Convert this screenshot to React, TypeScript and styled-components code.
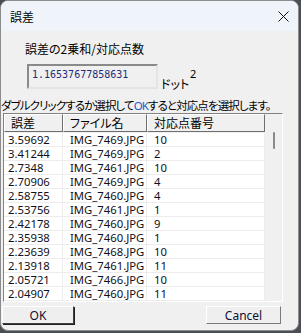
import styled, { createGlobalStyle } from 'styled-components'

const GlobalStyle = createGlobalStyle`
    html, body {
        margin: 0;
        padding: 0;
        background: #4a4f55;
    }
    body {
        font-family: "Noto Sans", "Noto Sans CJK JP", sans-serif;
        font-size: 12px;
        color: #000;
    }
`

const rows = [
    ['3.59692', 'IMG_7469.JPG', '10'],
    ['3.41244', 'IMG_7469.JPG', '2'],
    ['2.7348', 'IMG_7461.JPG', '10'],
    ['2.70906', 'IMG_7469.JPG', '4'],
    ['2.58755', 'IMG_7460.JPG', '4'],
    ['2.53756', 'IMG_7461.JPG', '1'],
    ['2.42178', 'IMG_7460.JPG', '9'],
    ['2.35938', 'IMG_7460.JPG', '1'],
    ['2.23639', 'IMG_7468.JPG', '10'],
    ['2.13918', 'IMG_7461.JPG', '11'],
    ['2.05721', 'IMG_7466.JPG', '10'],
    ['2.04907', 'IMG_7460.JPG', '11'],
    ['', '', ''],
]

const colWidths = [59, 84, 118]

const Window = styled.div`
    width: 297px;
    height: 329px;
    border: 1px solid #8c8c8c;
    border-radius: 8px;
    background: #f0f0f0;
    overflow: hidden;
    display: flex;
    flex-direction: column;
`

const TitleBar = styled.div`
    height: 30px;
    flex-shrink: 0;
    background: #eef4fa;
    display: flex;
    align-items: center;
    justify-content: space-between;
    padding-left: 9px;
    font-family: "Noto Sans CJK JP", sans-serif;
    font-size: 12px;
`

const CloseButton = styled.div`
    width: 30px;
    height: 30px;
    display: flex;
    align-items: center;
    justify-content: center;
`

const Body = styled.div`
    flex: 1;
    display: flex;
    flex-direction: column;
`

const Label = styled.div`
    margin: 10px 0 0 24px;
    height: 16px;
    line-height: 16px;
    font-family: "Noto Sans CJK JP", sans-serif;
    font-feature-settings: "palt";
`

const ValueRow = styled.div`
    margin: 7px 0 0 26px;
    display: flex;
    align-items: flex-end;
`

const ValueBox = styled.div`
    width: 124px;
    height: 21px;
    border: 2px solid;
    border-color: #8a8a8a #e4e4e4 #e4e4e4 #8a8a8a;
    background: #f0f0f0;
    color: #1e2d78;
    font-family: "DejaVu Sans Mono", monospace;
    font-size: 10px;
    padding-left: 3px;
    line-height: 18px;
    box-sizing: content-box;
`

const Unit = styled.div`
    margin-left: 3px;
    position: relative;
    font-family: "Noto Sans CJK JP", sans-serif;
    font-feature-settings: "palt";
    line-height: 14px;
    margin-bottom: -2px;
`

const Sup = styled.span`
    position: absolute;
    top: -10px;
    right: -7px;
    font-family: "Noto Sans", sans-serif;
    font-size: 11px;
`

const Hint = styled.div`
    margin: 8px 0 0 0;
    height: 16px;
    line-height: 16px;
    white-space: nowrap;
    font-family: "Noto Sans CJK JP", sans-serif;
    font-feature-settings: "palt";
    font-size: 11.5px;
    letter-spacing: -0.9px;
`

const Ok = styled.span`
    color: #1d5bc4;
    font-family: "Noto Sans", sans-serif;
`

const List = styled.div`
    margin: 0 0 0 2px;
    width: 278px;
    height: 187px;
    border: 1px solid;
    border-color: #828282 #ffffff #ffffff #828282;
    display: flex;
    overflow: hidden;
    background: #f0f0f0;
`

const Table = styled.div`
    width: 261px;
    flex-shrink: 0;
    display: flex;
    flex-direction: column;
`

const HeaderRow = styled.div`
    display: flex;
    height: 18px;
    flex-shrink: 0;
    margin-bottom: 1px;
`

const HeaderCell = styled.div<{ $w: number }>`
    width: ${(p) => p.$w}px;
    box-sizing: border-box;
    border-top: 1px solid #ffffff;
    border-left: 1px solid #ffffff;
    border-right: 1px solid #6e6e6e;
    border-bottom: 1px solid #6e6e6e;
    background: #f0f0f0;
    padding-left: 6px;
    line-height: 16px;
    font-family: "Noto Sans CJK JP", sans-serif;
    font-feature-settings: "palt";
`

const DataRow = styled.div`
    display: flex;
    height: 14px;
    flex-shrink: 0;
    background: #fff;
    border-bottom: 1px solid #ececec;
    box-sizing: border-box;
`

const Cell = styled.div<{ $w: number; $first?: boolean }>`
    width: ${(p) => p.$w}px;
    box-sizing: border-box;
    border-right: 1px solid #ececec;
    padding-left: ${(p) => (p.$first ? 4 : 7)}px;
    font-family: "Noto Sans", sans-serif;
    font-size: 11.3px;
    line-height: 14px;
    color: #101020;
    white-space: nowrap;
`

const Track = styled.div`
    flex: 1;
    padding: 18px 0 0 8px;
`

const Thumb = styled.div`
    width: 2px;
    height: 17px;
    background: #8a8a8a;
    border-radius: 1px;
`

const Footer = styled.div`
    margin-top: 4px;
    display: flex;
    justify-content: space-between;
    padding: 0 17px 0 1px;
`

const Button = styled.div<{ $w: number; $default?: boolean }>`
    width: ${(p) => p.$w}px;
    height: 18px;
    box-sizing: border-box;
    background: #efefef;
    border: 1px solid;
    border-color: #ffffff ${(p) => (p.$default ? '#404040' : '#7a7a7a')} ${(p) => (p.$default ? '#404040' : '#7a7a7a')} #ffffff;
    box-shadow: ${(p) => (p.$default ? '1px 1px 0 #202020' : 'none')};
    display: flex;
    align-items: center;
    justify-content: center;
    font-family: "Noto Sans", sans-serif;
    font-size: 12px;
    color: #101030;
`

const App = () => {
    return (
        <>
            <GlobalStyle />
            <Window>
                <TitleBar>
                    <span>誤差</span>
                    <CloseButton>
                        <svg width="11" height="11" viewBox="0 0 11 11">
                            <path d="M0.5 0.5 L10.5 10.5 M10.5 0.5 L0.5 10.5" stroke="#111" strokeWidth="1" />
                        </svg>
                    </CloseButton>
                </TitleBar>
                <Body>
                    <Label>誤差の2乗和/対応点数</Label>
                    <ValueRow>
                        <ValueBox>1.16537677858631</ValueBox>
                        <Unit>
                            ドット<Sup>2</Sup>
                        </Unit>
                    </ValueRow>
                    <Hint>
                        ダブルクリックするか選択して<Ok>OK</Ok>すると対応点を選択します。
                    </Hint>
                    <List>
                        <Table>
                            <HeaderRow>
                                <HeaderCell $w={colWidths[0]}>誤差</HeaderCell>
                                <HeaderCell $w={colWidths[1]}>ファイル名</HeaderCell>
                                <HeaderCell $w={colWidths[2]}>対応点番号</HeaderCell>
                            </HeaderRow>
                            {rows.map((r, i) => (
                                <DataRow key={i}>
                                    <Cell $w={colWidths[0]} $first>{r[0]}</Cell>
                                    <Cell $w={colWidths[1]}>{r[1]}</Cell>
                                    <Cell $w={colWidths[2]}>{r[2]}</Cell>
                                </DataRow>
                            ))}
                        </Table>
                        <Track>
                            <Thumb />
                        </Track>
                    </List>
                    <Footer>
                        <Button $w={72} $default>OK</Button>
                        <Button $w={75}>Cancel</Button>
                    </Footer>
                </Body>
            </Window>
        </>
    )
}

export default App
